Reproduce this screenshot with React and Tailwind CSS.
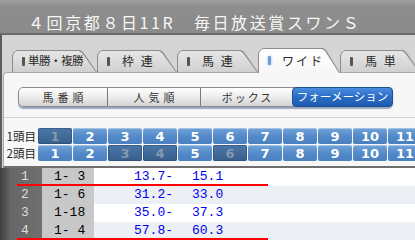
import React from 'react';

const tabs = [
  { label: '単勝・複勝', box: 'w-[85px] h-[22px]', text: 'ml-[3px] tracking-[-0.5px] text-[11.5px]' },
  { label: '枠 連', box: 'w-[80px] h-[22px]', text: 'ml-[12px] tracking-[2px] text-[12px]' },
  { label: '馬 連', box: 'w-[81px] h-[22px]', text: 'ml-[12px] tracking-[2px] text-[12px]' },
  { label: 'ワイド', box: 'w-[82px] h-[25px] -mb-px z-10', text: 'ml-[11px] tracking-[2px] text-[12px]', active: true },
  { label: '馬 単', box: 'w-[80px] h-[22px]', text: 'ml-[12px] tracking-[2px] text-[12px]' },
];

const sorts = [
  { label: '馬番順', cls: 'w-[89px] tracking-[4px] pl-[4px] border-r border-[#7a7a7a]' },
  { label: '人気順', cls: 'w-[93px] tracking-[4px] pl-[4px] border-r border-[#7a7a7a]' },
  { label: 'ボックス', cls: 'w-[91px] tracking-[2px] pl-[2px]' },
];

const rows = [
  { name: '1頭目', off: [1] },
  { name: '2頭目', off: [3, 4, 6] },
];

const results = [
  { rank: '1', combo: '1- 3', lo: '13.7-', hi: '15.1', mark: true },
  { rank: '2', combo: '1- 6', lo: '31.2-', hi: '33.0' },
  { rank: '3', combo: '1-18', lo: '35.0-', hi: '37.3' },
  { rank: '4', combo: '1- 4', lo: '57.8-', hi: '60.3', mark: true },
];

function Tab({ tab }) {
  return (
    <div className={`relative shrink-0 ${tab.box}`}>
      <div className="absolute inset-0 bg-[#8c8c8c] [clip-path:polygon(0_5px,2px_2px,5px_0,calc(100%_-_17px)_0,calc(100%_-_14px)_2px,100%_100%,0_100%)]" />
      <div
        className={`absolute left-px top-px right-px bottom-0 [clip-path:polygon(0_4px,2px_1px,4px_0,calc(100%_-_17px)_0,calc(100%_-_14px)_2px,100%_100%,0_100%)] ${
          tab.active
            ? 'bg-[linear-gradient(#ffffff,#f7f7f7)]'
            : 'bg-[linear-gradient(#e6e6e6,#d0d0d0)]'
        }`}
      />
      <div className="relative flex items-center h-full pl-[10px] text-[#2a2a2a] [font-family:'Noto_Sans_CJK_JP',sans-serif]">
        <span
          className={`w-[3px] h-[9px] rounded-[1px] ${
            tab.active ? 'bg-[#6b9ad6] shadow-[0_0_3px_#9cc0ee]' : 'bg-[#555]'
          }`}
        />
        <span className={`whitespace-pre leading-none ${tab.text}`}>{tab.label}</span>
      </div>
    </div>
  );
}

export default function App() {
  return (
    <div className="w-[415px] h-[248px] overflow-hidden bg-white">
      <div className="h-[35px] bg-[linear-gradient(#9e9e9e,#8d8d8d_20%,#8b8b8b)] border-b-2 border-[#6a6a6a] pl-[28px] pt-[12px] text-[16px] leading-[20px] tracking-[2.6px] text-[#f7f7f7] whitespace-nowrap [font-family:'Noto_Sans_CJK_JP',sans-serif]">
        ４回京都８日11R　毎日放送賞スワンＳ
      </div>

      <div className="border-l-2 border-[#5c5c5c] bg-[#d5d5d5]">
        <div className="flex items-end h-[37px] pl-[10px]">
          {tabs.map((t) => (
            <Tab key={t.label} tab={t} />
          ))}
        </div>

        <div className="ml-px h-[96px] bg-[#f7f7f7] border-t border-l border-[#a9a9a9] border-b-2 border-b-[#6e6e6e] rounded-tl-[4px]">
          <div className="ml-[14px] mt-[14px] w-[375px] h-[20px] flex rounded-[5px] border border-[#8d8d8d] bg-[linear-gradient(#ffffff,#ececec_50%,#d3d3d3)] shadow-[0_2px_1px_rgba(80,100,150,0.55)] text-[11px] text-[#333] [font-family:'Noto_Sans_CJK_JP',sans-serif]">
            {sorts.map((s) => (
              <div key={s.label} className={`flex items-center justify-center h-full ${s.cls}`}>
                {s.label}
              </div>
            ))}
            <div className="flex items-center justify-center flex-1 -my-px -mr-px rounded-[4px] border border-[#1d4f93] bg-[linear-gradient(#4a8de0,#2a6cc4_50%,#1f5cb0)] text-white text-[11.5px]">
              フォーメーション
            </div>
          </div>

          <div className="mt-[10px] h-px bg-[#d2d2d2]" />

          <div className="mt-[10px] flex flex-col gap-px">
            {rows.map((r) => (
              <div key={r.name} className="flex gap-px h-[16px]">
                <div className="w-[33px] shrink-0 pr-px text-right text-[11.5px] leading-[16px] text-[#222] [font-family:'Noto_Sans_CJK_JP',sans-serif]">
                  {r.name}
                </div>
                {[1, 2, 3, 4, 5, 6, 7, 8, 9, 10, 11].map((n) => {
                  const off = r.off.includes(n);
                  return (
                    <div
                      key={n}
                      className={`w-[34px] shrink-0 rounded-[2px] flex items-center justify-center text-[13px] font-bold leading-none [font-family:'DejaVu_Sans',sans-serif] ${
                        off
                          ? 'bg-[linear-gradient(#4b77a7,#375f8c)] text-[#8598ae] shadow-[inset_0_0_0_1px_rgba(40,70,110,0.5)]'
                          : 'bg-[linear-gradient(#73a3d8,#5289c8_55%,#4a80c0)] text-white shadow-[inset_0_1px_0_rgba(255,255,255,0.35)]'
                      }`}
                    >
                      {n}
                    </div>
                  );
                })}
              </div>
            ))}
          </div>
        </div>
      </div>

      <div className="[font-family:'Liberation_Mono',monospace] text-[13px] leading-[18px] whitespace-pre">
        {results.map((r, i) => (
          <div key={r.rank} className="relative flex h-[18px]">
            <div className="w-[42px] shrink-0 pl-[21px] bg-[linear-gradient(to_right,#3e3e3e,#666_25%,#707070)] text-[#dcdcdc]">
              {r.rank}
            </div>
            <div className="w-[52px] shrink-0 pl-[12px] bg-[#c8c8c8] text-black">{r.combo}</div>
            <div className={`flex-1 pl-[40px] flex text-[#0000f0] ${i % 2 ? 'bg-[#eceff3]' : 'bg-white'}`}>
              <span className="w-[58px]">{r.lo}</span>
              <span>{r.hi}</span>
            </div>
            {r.mark && <div className="absolute left-[17px] bottom-0 w-[251px] h-[2px] bg-[#ff0000]" />}
          </div>
        ))}
      </div>
    </div>
  );
}
